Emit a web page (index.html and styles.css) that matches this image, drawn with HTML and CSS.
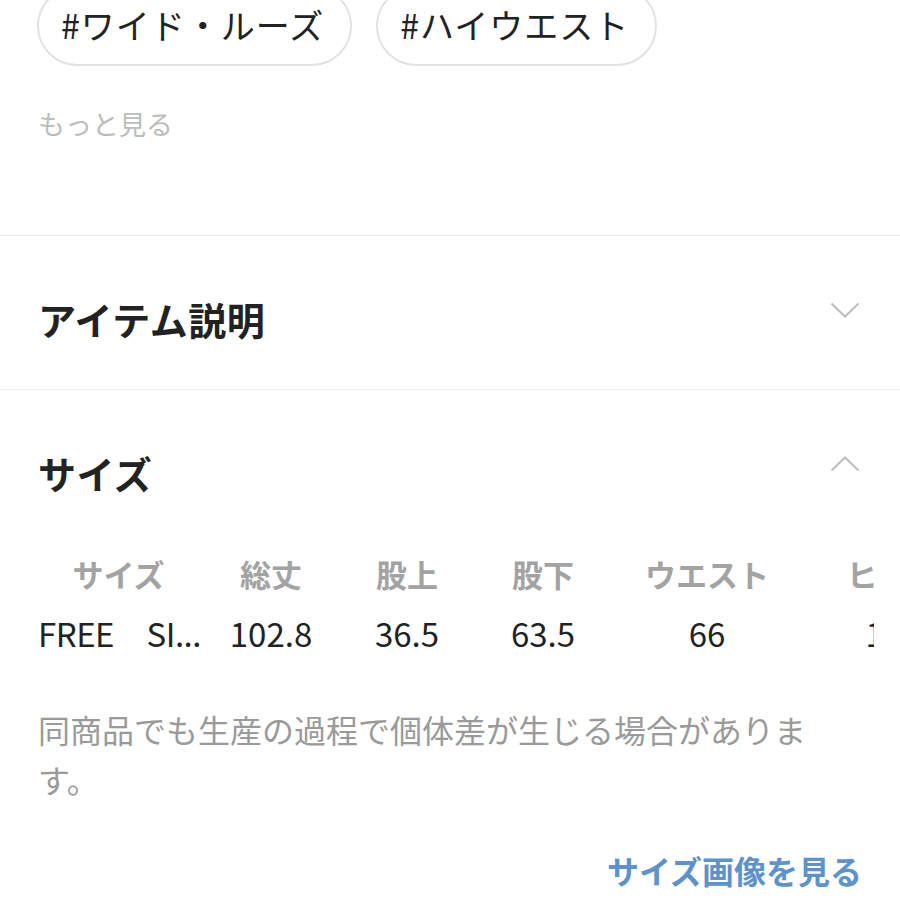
FILE: index.html
```html
<!DOCTYPE html>
<html lang="ja">
<head>
<meta charset="utf-8">
<link rel="stylesheet" href="styles.css">
</head>
<body>
<div class="page">
  <section class="tags-section">
    <div class="tags">
      <span class="tag">#ワイド・ルーズ</span>
      <span class="tag">#ハイウエスト</span>
    </div>
    <div class="more">もっと見る</div>
  </section>

  <section class="acc">
    <div class="acc-head">
      <h2 class="acc-title">アイテム説明</h2>
      <svg class="chev" width="30" height="16" viewBox="0 0 30 16"><polyline points="1.5,1.5 15,14.5 28.5,1.5" fill="none" stroke="#bdbdbd" stroke-width="2"/></svg>
    </div>
  </section>

  <section class="acc">
    <div class="acc-head">
      <h2 class="acc-title">サイズ</h2>
      <svg class="chev" width="30" height="16" viewBox="0 0 30 16"><polyline points="1.5,14.5 15,1.5 28.5,14.5" fill="none" stroke="#bdbdbd" stroke-width="2"/></svg>
    </div>
    <div class="size-table">
      <div class="size-row head">
        <div class="cell">サイズ</div>
        <div class="cell">総丈</div>
        <div class="cell">股上</div>
        <div class="cell">股下</div>
        <div class="cell">ウエスト</div>
        <div class="cell">ヒップ</div>
      </div>
      <div class="size-row data">
        <div class="cell first">FREE　SI...</div>
        <div class="cell">102.8</div>
        <div class="cell">36.5</div>
        <div class="cell">63.5</div>
        <div class="cell">66</div>
        <div class="cell">100</div>
      </div>
    </div>
    <p class="note">同商品でも生産の過程で個体差が生じる場合があります。</p>
    <div class="link-row"><a class="size-link">サイズ画像を見る</a></div>
  </section>
</div>
</body>
</html>
```

FILE: styles.css
```css
html, body {
  margin: 0;
  padding: 0;
  background: #ffffff;
}
body {
  font-family: "Noto Sans CJK JP", "Noto Sans", sans-serif;
  color: #222222;
  overflow: hidden;
}
.page {
  display: flex;
  flex-direction: column;
}
.tags-section {
  padding: 0 38px 93px 37px;
}
.tags {
  display: flex;
  gap: 24px;
  margin-top: -14px;
}
.tag {
  display: inline-flex;
  align-items: center;
  height: 76px;
  padding: 0 26px 4px 22px;
  box-sizing: border-box;
  height: 80px;
  border: 2px solid #e2e2e2;
  border-radius: 40px;
  font-size: 34px;
  letter-spacing: 1px;
  color: #222222;
  white-space: nowrap;
}
.more {
  margin-top: 40px;
  font-size: 27px;
  line-height: 36px;
  color: #bcbcbc;
  padding-left: 1px;
}
.acc {
  border-top: 1px solid #ececec;
  padding: 0 38px;
}
.acc-head {
  display: flex;
  align-items: center;
  justify-content: space-between;
  padding: 65px 0 52px;
}
.acc-title {
  margin: 0;
  font-size: 38px;
  line-height: 36px;
  font-weight: 700;
  letter-spacing: 0.5px;
  color: #222222;
}
.chev {
  margin-bottom: 18px;
  margin-right: 2px;
}
.size-table {
  margin-right: -12px;
  overflow: hidden;
}
.size-row {
  display: grid;
  grid-template-columns: 161px 144px 128px 144px 184px 188px;
  height: 60px;
  align-items: center;
}
.cell {
  text-align: center;
  white-space: nowrap;
}
.size-row.head .cell {
  font-size: 31px;
  font-weight: 700;
  color: #a3a3a3;
}
.size-row.data .cell {
  font-size: 33px;
  color: #222222;
}
.size-row.data .cell.first {
  text-align: left;
  letter-spacing: -0.5px;
}
.note {
  margin: 41px 0 0;
  font-size: 32px;
  line-height: 50px;
  color: #9a9a9a;
}
.link-row {
  display: flex;
  justify-content: flex-end;
  margin-top: 46px;
}
.size-link {
  font-size: 32px;
  line-height: 40px;
  font-weight: 700;
  color: #5d92cc;
}
```
